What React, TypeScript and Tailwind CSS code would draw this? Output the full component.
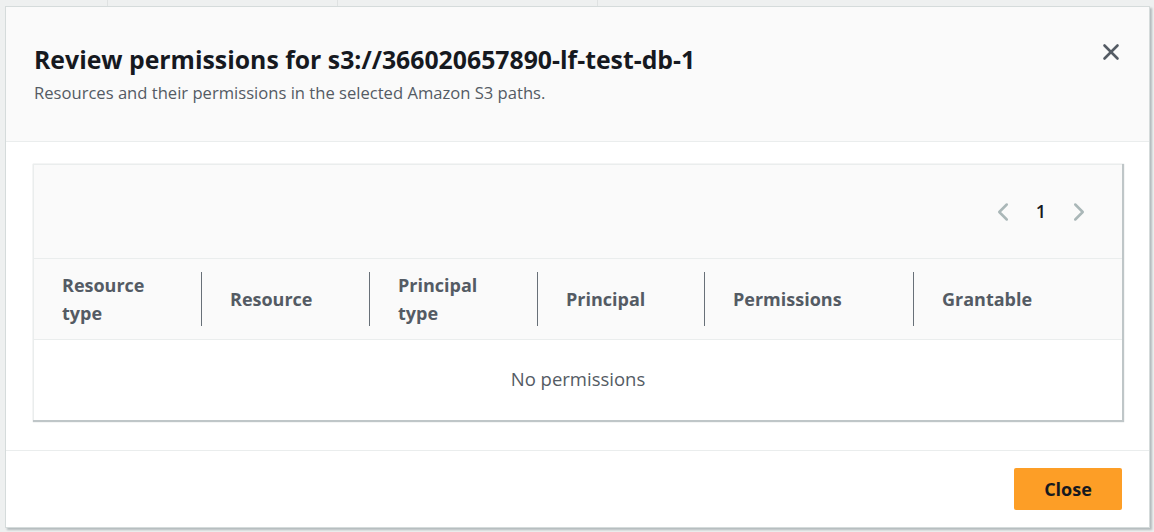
import {ChevronLeft, ChevronRight, X} from 'lucide-react';

const columns = [
  {label: ['Resource', 'type'], width: 'w-[167px]'},
  {label: ['Resource'], width: 'w-[168px]'},
  {label: ['Principal', 'type'], width: 'w-[168px]'},
  {label: ['Principal'], width: 'w-[167px]'},
  {label: ['Permissions'], width: 'w-[209px]'},
  {label: ['Grantable'], width: 'flex-1'},
];

export default function App() {
  return (
    <div className="h-[532px] w-[1154px] overflow-hidden bg-[#eef0f0] font-['Open_Sans',sans-serif]">
      <div className="flex h-[6px] pl-[107px]">
        <div className="w-[230px] border-l border-[#dfe2e2]" />
        <div className="w-[260px] border-l border-[#dfe2e2]" />
        <div className="border-l border-[#dfe2e2]" />
      </div>
      <div className="ml-[5px] w-[1145px] border border-[#d5dbdb] bg-white shadow-[2px_2px_2px_rgba(0,28,36,0.25)]">
        <header className="flex items-start justify-between border-b border-[#eaeded] bg-[#fafafa] pb-[38px] pl-[28px] pr-[25px] pt-[37px]">
          <div>
            <h2 className="text-[24.8px] font-bold leading-[30px] text-[#16191f]">
              Review permissions for s3://366020657890-lf-test-db-1
            </h2>
            <p className="mt-[9px] text-[16.6px] leading-[20px] text-[#545b64]">
              Resources and their permissions in the selected Amazon S3 paths.
            </p>
          </div>
          <button type="button" aria-label="Close" className="mt-[-5px] text-[#545b64]">
            <X size={26} strokeWidth={2.4} />
          </button>
        </header>

        <div className="px-[27px] pb-[30px] pt-[22px]">
          <div className="border-l border-t border-[#eaeded] bg-white shadow-[1px_1px_1px_1px_rgba(0,28,36,0.25)]">
            <div className="flex h-[94px] items-center justify-end border-b border-[#eaeded] bg-[#fafafa] pr-[28px]">
              <ChevronLeft size={30} strokeWidth={2} className="text-[#aab7b8]" />
              <span className="mx-[18px] text-[18px] font-semibold text-[#16191f]">1</span>
              <ChevronRight size={30} strokeWidth={2} className="text-[#aab7b8]" />
            </div>
            <div className="flex h-[81px] items-center border-b border-[#eaeded] bg-[#fafafa]">
              {columns.map((col, i) => (
                <div
                  key={col.label.join(' ')}
                  className={`${col.width} flex h-[54px] items-center pl-[28px] ${i > 0 ? 'border-l border-[#687078]' : ''}`}
                >
                  <span className="text-[18px] font-bold leading-[28px] text-[#545b64]">
                    {col.label.map((line) => (
                      <span key={line} className="block">
                        {line}
                      </span>
                    ))}
                  </span>
                </div>
              ))}
            </div>
            <div className="flex h-[80px] items-center justify-center pb-[3px] text-[18.5px] text-[#545b64]">
              No permissions
            </div>
          </div>
        </div>

        <footer className="flex justify-end border-t border-[#eaeded] pb-[17px] pl-[28px] pr-[27px] pt-[17px]">
          <button
            type="button"
            className="h-[42px] w-[108px] rounded-[2px] bg-[#fd9e26] text-[18px] font-bold text-[#16191f]"
          >
            Close
          </button>
        </footer>
      </div>
    </div>
  );
}
